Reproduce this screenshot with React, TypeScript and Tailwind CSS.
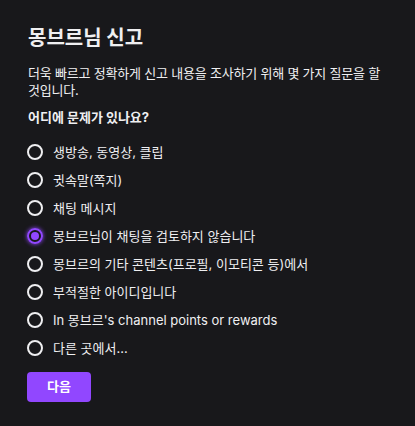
import React from "react";

const options = [
  "생방송, 동영상, 클립",
  "귓속말(쪽지)",
  "채팅 메시지",
  "몽브르님이 채팅을 검토하지 않습니다",
  "몽브르의 기타 콘텐츠(프로필, 이모티콘 등)에서",
  "부적절한 아이디입니다",
  "In 몽브르's channel points or rewards",
  "다른 곳에서...",
];

export default function App() {
  return (
    <div
      className="w-[415px] h-[426px] bg-[#18181b] text-[#efeff1] px-[28px] pt-[26px]"
      style={{ fontFamily: "Inter, 'Noto Sans CJK KR', sans-serif" }}
    >
      <h1 className="text-[20px] font-bold leading-[24px]">몽브르님 신고</h1>
      <p className="mt-[15px] text-[13px] leading-[17px] tracking-[-0.2px]">
        더욱 빠르고 정확하게 신고 내용을 조사하기 위해 몇 가지 질문을 할
        <br />
        것입니다.
      </p>
      <p className="mt-[10px] text-[13px] font-bold leading-[17px]">어디에 문제가 있나요?</p>
      <div className="mt-[16px] flex flex-col gap-[8px]">
        {options.map((o, i) => {
          const sel = i === 3;
          return (
            <label key={i} className="flex items-center h-[20px] -ml-px">
              {sel ? (
                <span className="w-[16px] h-[16px] rounded-full border-2 border-[#9147ff] flex items-center justify-center shadow-[0_0_4px_#9147ff]">
                  <span className="w-[8px] h-[8px] rounded-full bg-[#9147ff]" />
                </span>
              ) : (
                <span className="w-[16px] h-[16px] rounded-full border-2 border-[#efeff1]" />
              )}
              <span className="ml-[10px] text-[13px] leading-[17px]">{o}</span>
            </label>
          );
        })}
      </div>
      <button className="mt-[14px] -ml-px w-[64px] h-[30px] rounded-[4px] bg-[#9147ff] text-white text-[13px] font-bold">
        다음
      </button>
    </div>
  );
}
